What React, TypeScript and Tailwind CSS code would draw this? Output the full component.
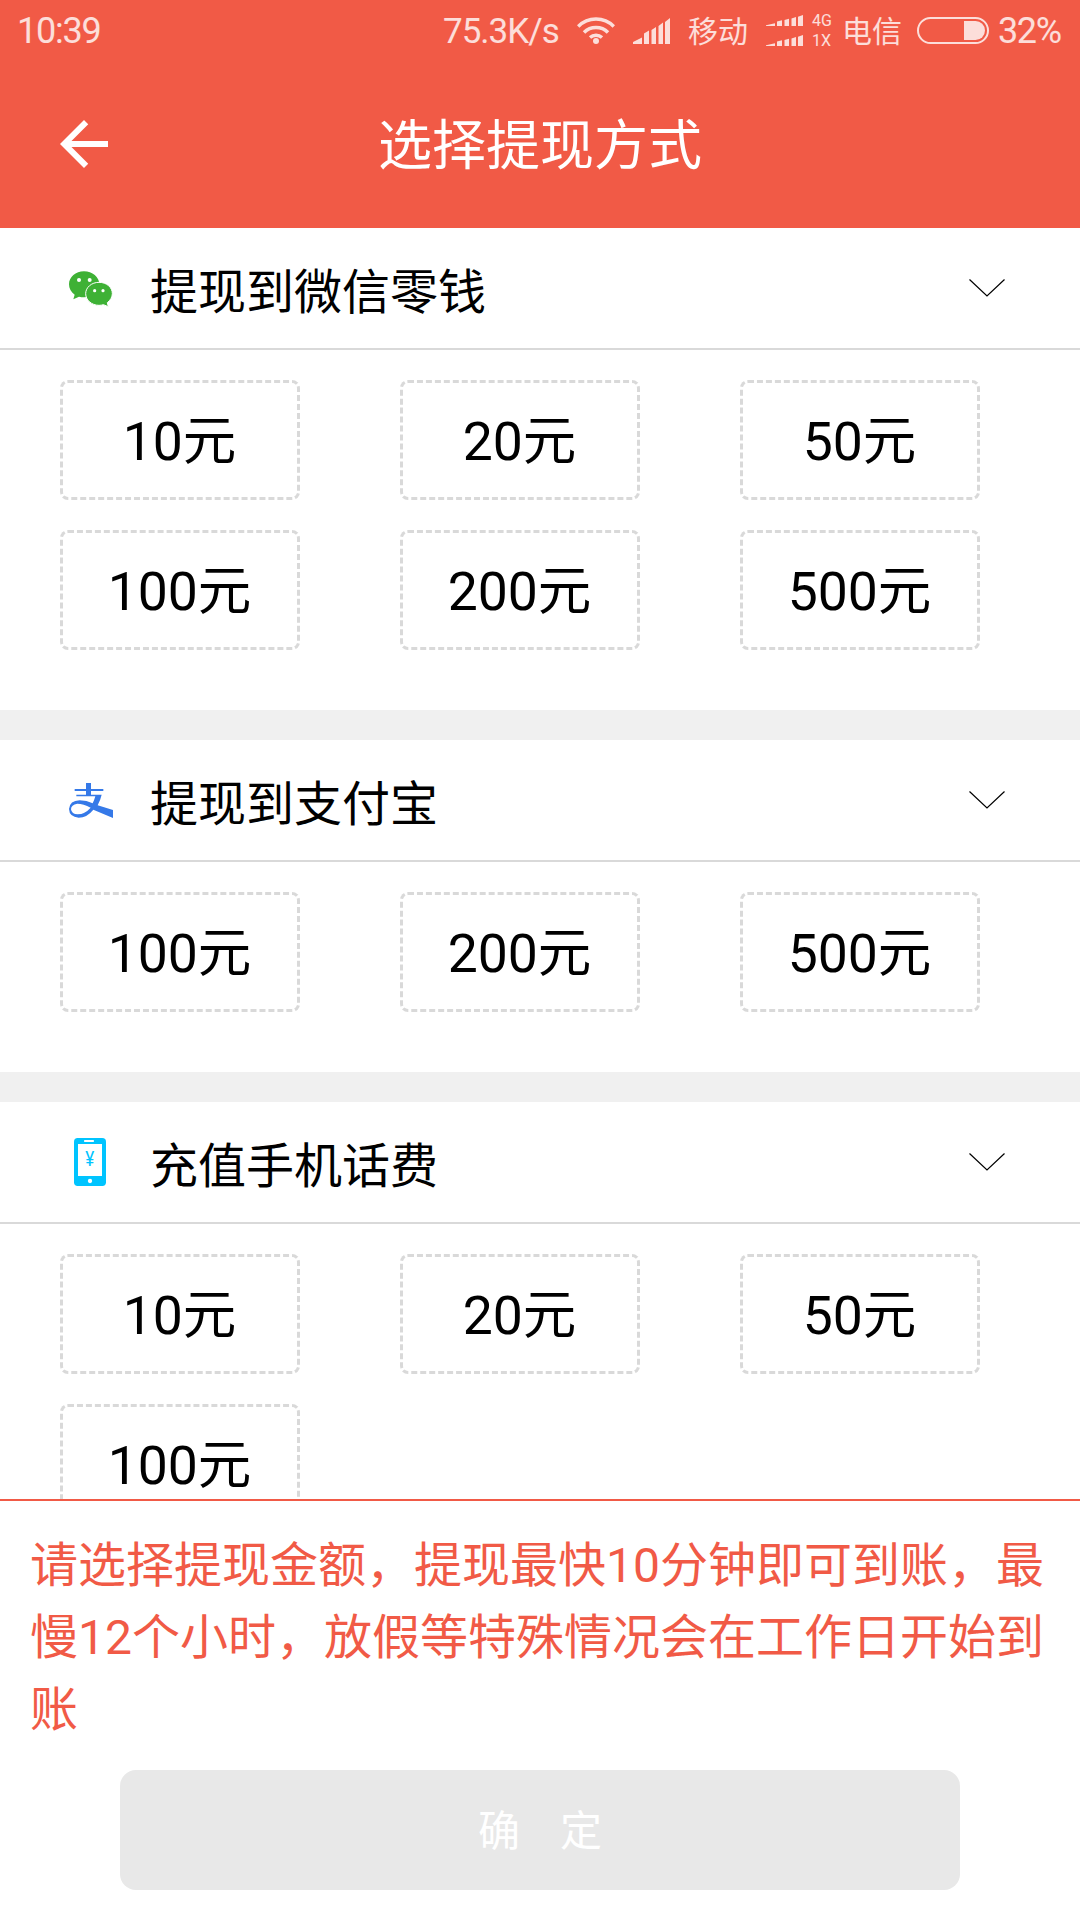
import type { ReactNode } from "react";
import { MdArrowBack } from "react-icons/md";

function WechatIcon() {
  return (
    <svg viewBox="78 72 144 144" className="size-12">
      <g fill="#3eb135">
        <path d="M132 94c25 0 46 17 46 39s-21 39-46 39q-8 0-15-2l-17 8 4-14c-11-7-17-19-17-31 0-22 20-39 45-39z" />
        <path
          d="M177 127c23 0 40 15 40 34 0 10-6 20-15 27l3 12-15-6q-6 2-13 2c-22 0-40-16-40-35s18-34 40-34z"
          stroke="#fff"
          strokeWidth="3"
        />
      </g>
      <g fill="#fff">
        <circle cx="117" cy="120" r="6" />
        <circle cx="149" cy="120" r="6" />
        <circle cx="164" cy="152" r="4.8" />
        <circle cx="189" cy="152" r="4.8" />
      </g>
    </svg>
  );
}

function AlipayIcon() {
  return (
    <svg viewBox="78 48 144 144" className="size-12" fill="#3579e8">
      <path d="M138 69h15v18h37v6h-37v12h-15V93h-34v-6h34z" />
      <path
        fillRule="evenodd"
        d="M109 104H185Q181 121 173 136L219 150V174L160 149Q141 173 116 173Q88 171 87 147Q89 122 119 121Q140 121 158 130Q163 120 166 109H109ZM152 143Q130 131 112 131Q93 134 93 148Q95 163 113 163Q135 162 152 143Z"
      />
    </svg>
  );
}

function PhoneIcon() {
  return (
    <svg viewBox="78 114 144 144" className="size-12">
      <rect x="102" y="114" width="96" height="144" rx="11" fill="#00c4ff" />
      <rect x="114" y="132" width="72" height="96" fill="#fff" />
      <rect x="132" y="120" width="30" height="6" rx="2" fill="#fff" />
      <circle cx="150" cy="243" r="6.5" fill="#fff" />
      <text
        x="136"
        y="199"
        fontSize="62"
        textLength="27"
        lengthAdjust="spacingAndGlyphs"
        fill="#00c4ff"
        className="font-['Roboto',sans-serif]"
      >
        ¥
      </text>
    </svg>
  );
}

function Bars({ className }: { className: string }) {
  return (
    <svg viewBox="0 0 37 26" preserveAspectRatio="none" fill="currentColor" className={className}>
      <path d="M0 26v-2l9-4.500V26zM11 26V15.500l5-3V26zM18.500 26V12l4.500-3v17zM25.500 26V8l4.500-3.500V26zM32 26V4l5-4v26z" />
    </svg>
  );
}

function StatusBar() {
  return (
    <div className="flex h-[60px] items-center pt-0.5 pl-[17px] text-[36px] leading-none text-white/80">
      <span className="w-[426px] shrink-0 tracking-[-1.2px]">10:39</span>
      <span className="w-[134px] shrink-0 text-[35px] tracking-[-1px]">75.3K/s</span>
      <svg viewBox="0 0 38 28" fill="none" stroke="currentColor" strokeWidth="3.500" className="mb-0.5 h-7 w-[38px] shrink-0">
        <path d="M1.200 10.500a25 25 0 0 1 35.600 0M7 16.500a17 17 0 0 1 24 0M13 21.500a9 9 0 0 1 12 0" />
        <circle cx="19" cy="25" r="3" fill="currentColor" stroke="none" />
      </svg>
      <Bars className="ml-[18px] h-[26px] w-[37px] shrink-0" />
      <span className="ml-[18px] w-[60px] shrink-0 pt-px text-[30px]">移动</span>
      <div className="ml-[18px] flex w-[37px] shrink-0 flex-col gap-[9px] pb-0.5">
        <Bars className="h-[11px] w-[37px]" />
        <Bars className="h-[11px] w-[37px]" />
      </div>
      <div className="ml-[9px] flex w-[30px] shrink-0 flex-col gap-1 text-[16px]">
        <span>4G</span>
        <span>1X</span>
      </div>
      <span className="w-[60px] shrink-0 pt-px text-[30px]">电信</span>
      <div className="mb-0.5 ml-[15px] flex h-[27px] w-[72px] shrink-0 items-center justify-end rounded-full border-2 border-current pr-[2px]">
        <div className="h-[19px] w-[21px] rounded-r-full bg-current" />
      </div>
      <span className="ml-[9px] tracking-[-1.4px]">32%</span>
    </div>
  );
}

type SectionProps = {
  icon: ReactNode;
  title: string;
  amounts: number[];
};

function Section({ icon, title, amounts }: SectionProps) {
  return (
    <section className="bg-white">
      <div className="flex h-[122px] items-center border-b-2 border-[#d9d9d9] pr-[75px] pl-[66px]">
        {icon}
        <h2 className="ml-9 flex-1 pt-[9px] text-5xl">{title}</h2>
        <svg viewBox="0 0 36 18" fill="none" stroke="#000" strokeWidth="1.200" className="h-[18px] w-9">
          <path d="M.5.5 18 17 35.500.5" />
        </svg>
      </div>
      <div className="grid grid-cols-[repeat(3,240px)] gap-x-[100px] gap-y-[30px] px-[60px] pt-[30px] pb-[60px]">
        {amounts.map((amount) => (
          <button
            key={amount}
            className="h-[120px] rounded-lg border-3 border-dashed border-[#d9d9d9] pt-1 pr-px text-[53.5px] leading-none"
          >
            {amount}元
          </button>
        ))}
      </div>
    </section>
  );
}

export default function App() {
  return (
    <div className="flex h-[1920px] w-[1080px] flex-col overflow-hidden bg-white font-['Roboto','Noto_Sans_CJK_SC',sans-serif] text-black">
      <header className="h-[228px] shrink-0 bg-[#f15a46]">
        <StatusBar />
        <div className="grid h-[168px] grid-cols-[120px_1fr_120px] items-center text-white">
          <MdArrowBack className="ml-12 size-[72px]" />
          <h1 className="pt-[5px] text-center text-[54px] leading-none">选择提现方式</h1>
        </div>
      </header>

      <main className="flex h-[1271px] shrink-0 flex-col gap-[30px] overflow-hidden bg-[#f0f0f0]">
        <Section icon={<WechatIcon />} title="提现到微信零钱" amounts={[10, 20, 50, 100, 200, 500]} />
        <Section icon={<AlipayIcon />} title="提现到支付宝" amounts={[100, 200, 500]} />
        <Section icon={<PhoneIcon />} title="充值手机话费" amounts={[10, 20, 50, 100]} />
      </main>

      <footer className="flex-1 border-t-2 border-[#f15a46] pt-[29px]">
        <p className="h-[216px] px-[30px] text-5xl leading-[72px] text-[#f15a46]">
          请选择提现金额，提现最快10分钟即可到账，最慢12个小时，放假等特殊情况会在工作日开始到账
        </p>
        <button className="mx-auto mt-6 flex h-[120px] w-[840px] items-center justify-center gap-10 rounded-2xl bg-[#e8e8e8] pt-0.5 text-[42px] text-white">
          <span>确</span>
          <span>定</span>
        </button>
      </footer>
    </div>
  );
}
